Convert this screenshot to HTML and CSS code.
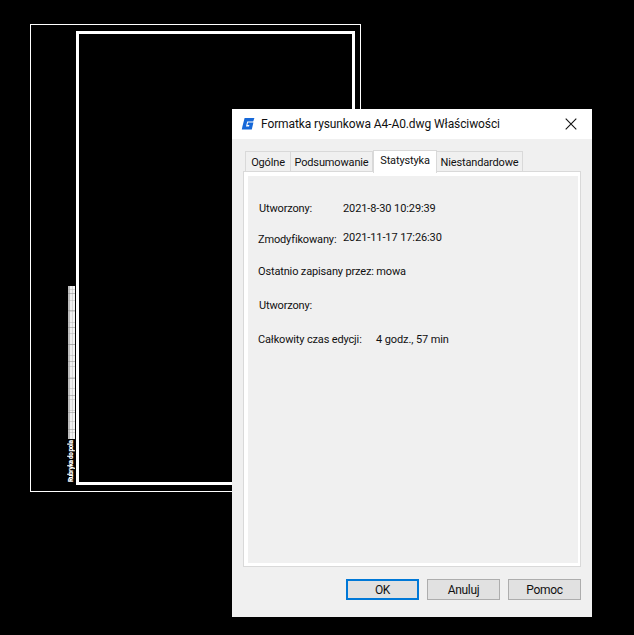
FILE: index.html
```html
<!DOCTYPE html>
<html lang="pl">
<head>
<meta charset="utf-8">
<title>Właściwości</title>
<link rel="stylesheet" href="styles.css">
</head>
<body>
<div class="drawing-outer"></div>
<div class="drawing-inner"></div>
<div class="strip"></div>
<div class="strip-label">Rubryka do pola</div>
<section class="dialog">
  <header class="titlebar">
    <svg class="logo" width="14" height="14" viewBox="0 0 14 14"><path d="M3.6 1H13.4L12.2 4.4H6.2L5 9.4H8L8.4 7.9H6.4L7 5.5H12.4L10.8 12.6H.8L1.4 9.6Z" fill="#1668d8"/></svg>
    <span class="title">Formatka rysunkowa A4-A0.dwg Właściwości</span>
    <svg class="close" width="12" height="12" viewBox="0 0 12 12"><path d="M.7.7 11.3 11.3M11.3.7.7 11.3" stroke="#111" stroke-width="1.1" fill="none"/></svg>
  </header>
  <div class="body">
    <nav class="tabs">
      <span class="tab tab-1">Ogólne</span>
      <span class="tab tab-2">Podsumowanie</span>
      <span class="tab tab-3 active">Statystyka</span>
      <span class="tab tab-4">Niestandardowe</span>
    </nav>
    <div class="panel">
      <div class="content">
        <div class="row row-a"><span class="label">Utworzony:</span><span class="value">2021-8-30 10:29:39</span></div>
        <div class="row row-b"><span class="label shift">Zmodyfikowany:</span><span class="value">2021-11-17 17:26:30</span></div>
        <div class="row row-c">Ostatnio zapisany przez: mowa</div>
        <div class="row row-d"><span class="label">Utworzony:</span></div>
        <div class="row row-e"><span class="label wide">Całkowity czas edycji:</span><span class="value">4 godz., 57 min</span></div>
      </div>
    </div>
    <footer class="buttons">
      <button class="btn default">OK</button>
      <button class="btn">Anuluj</button>
      <button class="btn">Pomoc</button>
    </footer>
  </div>
</section>
</body>
</html>
```
FILE: styles.css
```css
* { box-sizing: border-box; }
html, body { margin: 0; height: 100%; }
body { background: #000; position: relative; overflow: hidden; font: 11px Roboto, "Liberation Sans", Arial, sans-serif; letter-spacing: -0.15px; color: #111; }
.drawing-outer { position: absolute; left: 30px; top: 24px; width: 331px; height: 468px; border: 1px solid #fff; }
.drawing-inner { position: absolute; left: 76px; top: 31px; width: 279px; height: 454px; border: 3px solid #fff; }
.strip { position: absolute; left: 68px; top: 286px; width: 7px; height: 153px;
  background:
    repeating-linear-gradient(180deg, transparent 0 7px, rgba(140,140,140,.5) 7px 8px, transparent 8px 17px),
    repeating-linear-gradient(180deg, transparent 0 3px, rgba(170,170,170,.4) 3px 4.3px, transparent 4.3px 11px),
    linear-gradient(90deg, #bdbdbd 0 2px, #efefef 2px 4px, #d8d8d8 4px 5px, #f4f4f4 5px 7px); }
.strip-label { position: absolute; left: 68px; top: 440px; width: 7px; height: 42px; writing-mode: vertical-rl; transform: rotate(180deg); color: #fff; font-size: 6.5px; font-weight: 900; letter-spacing: -0.4px; line-height: 7px; white-space: nowrap; text-align: left; }
.dialog { position: absolute; left: 232px; top: 109px; width: 360px; height: 508px; background: #f0f0f0; display: flex; flex-direction: column; }
.titlebar { height: 30px; background: #fff; display: flex; align-items: center; padding: 0 15px 0 9px; flex: none; }
.logo { flex: none; }
.title { margin-left: 6px; flex: 1; font-size: 12px; letter-spacing: -0.1px; }
.close { flex: none; }
.body { flex: 1; padding: 11px 11px 0; display: flex; flex-direction: column; }
.tabs { display: flex; height: 21px; padding-left: 2px; align-items: flex-end; position: relative; z-index: 1; }
.tab { height: 20px; border: 1px solid #d9d9d9; border-left: 0; border-bottom: 0; display: flex; align-items: center; justify-content: center; background: #f0f0f0; padding-top: 2px; }
.tab-1 { width: 46px; border-left: 1px solid #d9d9d9; }
.tab-2 { width: 82px; }
.tab-3 { width: 64px; }
.tab-4 { width: 86px; }
.active { height: 23px; background: #fff; border: 1px solid #d9d9d9; border-bottom: 0; margin-bottom: -2px; padding: 0 0 3px; }
.panel { width: 338px; height: 396px; border: 1px solid #d9d9d9; background: #fff; padding: 4px 2px 3px 4px; flex: none; }
.content { height: 100%; background: #f0f0f0; padding: 25px 0 0 10px; }
.row { display: flex; height: 16px; line-height: 16px; white-space: nowrap; }
.row-b { margin-top: 13px; }
.row-c { margin-top: 18px; }
.row-d, .row-e { margin-top: 18px; }
.value { letter-spacing: -0.1px; }
.label { width: 84px; margin-left: 1px; }
.shift { margin-left: 0; width: 85px; position: relative; top: 2px; }
.wide { margin-left: 0; width: 118px; }
.buttons { display: flex; justify-content: flex-end; gap: 8px; margin-top: 12px; width: 338px; }
.btn { width: 73px; height: 21px; padding: 0; background: #e1e1e1; border: 1px solid #adadad; font: inherit; font-size: 12px; letter-spacing: -0.3px; color: #111; }
.default { border: 2px solid #0078d7; }
```
